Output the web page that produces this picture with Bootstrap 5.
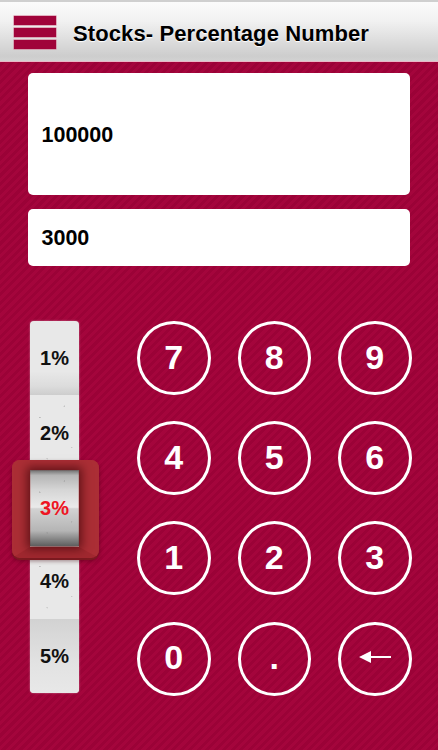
<!DOCTYPE html>
<html lang="en"><head><meta charset="utf-8">
<title>Stocks- Percentage Number</title>
<link href="https://cdn.jsdelivr.net/npm/bootstrap@5.3.0/dist/css/bootstrap.min.css" rel="stylesheet">
<style>
html,body{height:100%}
body{width:438px;height:750px;overflow:hidden;font-family:"Liberation Sans",Arial,sans-serif;font-weight:700;color:#000;
background-color:#a0033a;background-image:repeating-linear-gradient(135deg,#a4053c 0 3px,#9b0237 3px 6px)}
.top-bar{height:62px;padding:4px 0 0 14px;gap:17px;background:linear-gradient(#cfcfcf 0 2px,#fbfbfb 2px,#f1f1f1 35%,#cdcdcd 92%,#d2d2d2);border-bottom:1px solid #e9b9c6}
.burger{width:42px;height:33px;gap:3.5px}
.burger i{display:block;height:8.7px;background:#a0033a;box-shadow:0 0 0 .5px #cf6f8b}
.title-text{font-size:22px;letter-spacing:.1px;text-shadow:0 1px 1px #fff;line-height:1;margin-top:2px}
.fields{padding:11px 28px 0 27.5px;gap:14px}
.value-box{border:0;border-radius:5px;background:#fff;color:#000;font-size:21.5px;font-weight:700;padding:2px 14px 0;box-shadow:none}
.value-box.tall{height:122px}
.value-box.short{height:57px}
.lower{padding:55px 0 0 30px}
.percent-strip{width:49px;height:372px;border-radius:4px;color:#111;font-size:20px;
background-color:#e8e8e8;box-shadow:0 0 2px rgba(255,255,255,.5);overflow:hidden}
.percent-cell{height:74.4px;background-image:radial-gradient(circle at 20% 30%,#bbb 0 .6px,transparent 1px),radial-gradient(circle at 70% 15%,#c4c4c4 0 .6px,transparent 1px),radial-gradient(circle at 85% 70%,#c8c8c8 0 .6px,transparent 1px),radial-gradient(circle at 35% 85%,#cfcfcf 0 .6px,transparent 1px)}
.percent-cell.fold-bottom{background-image:linear-gradient(transparent 68%,#dcdcdc 88%,#cdcdcd)}
.percent-cell.fold-top{background-image:linear-gradient(#d2d2d2,#d8d8d8 20%,#e2e2e2 60%,#e8e8e8)}
.pick{color:#ee1522;font-size:20px}
.strip-wrap{width:49px}
.picker{position:absolute;left:-18px;top:139px;width:87px;height:98px;border-style:solid;border-width:10px 20px 11px 18px;border-color:#ab2e35;border-bottom-color:#a0282f;border-radius:8px;box-shadow:0 2px 0 #7c1a20,0 3px 4px rgba(60,0,10,.45),inset 0 0 0 1px rgba(200,90,90,.4)}
.picker-window{width:49px;height:76px;background:linear-gradient(rgba(70,70,70,.75),rgba(130,130,130,.5) 7%,rgba(170,170,170,.3) 26%,rgba(255,255,255,.1) 49%,rgba(170,170,170,.35) 51%,rgba(130,130,130,.5) 80%,rgba(60,60,60,.8));box-shadow:0 0 9px 3px rgba(50,0,5,.6)}
.keypad{margin-left:58px;display:grid;grid-template-columns:repeat(3,73.5px);grid-auto-rows:74px;column-gap:27px;row-gap:26.2px}
.key-round{width:73.5px;height:74px;padding:0 0 3px;border:3px solid #fff;border-radius:50%;background:transparent;color:#fff;font-size:34px;font-weight:700;line-height:1;font-family:inherit}
</style></head>
<body>
<header class="top-bar d-flex align-items-center">
  <div class="burger d-flex flex-column" aria-label="Menu"><i></i><i></i><i></i></div>
  <div class="title-text">Stocks- Percentage Number</div>
</header>
<section class="fields d-flex flex-column">
  <div class="form-control value-box tall d-flex align-items-center">100000</div>
  <div class="form-control value-box short d-flex align-items-center">3000</div>
</section>
<section class="lower d-flex">
  <div class="strip-wrap position-relative">
    <div class="percent-strip d-flex flex-column">
      <div class="percent-cell fold-bottom d-flex align-items-center justify-content-center">1%</div>
      <div class="percent-cell d-flex align-items-center justify-content-center">2%</div>
      <div class="percent-cell d-flex align-items-center justify-content-center"></div>
      <div class="percent-cell d-flex align-items-center justify-content-center">4%</div>
      <div class="percent-cell fold-top d-flex align-items-center justify-content-center">5%</div>
    </div>
    <div class="picker"><div class="picker-window d-flex align-items-center justify-content-center"><span class="pick">3%</span></div></div>
  </div>
  <div class="keypad">
    <button class="btn key-round">7</button><button class="btn key-round">8</button><button class="btn key-round">9</button>
    <button class="btn key-round">4</button><button class="btn key-round">5</button><button class="btn key-round">6</button>
    <button class="btn key-round">1</button><button class="btn key-round">2</button><button class="btn key-round">3</button>
    <button class="btn key-round">0</button><button class="btn key-round">.</button>
    <button class="btn key-round d-flex align-items-center justify-content-center" aria-label="Backspace">
      <svg width="34" height="14" viewBox="0 0 34 14"><path d="M1 7 13 1v5h20v2H13v5z" fill="#fff"/></svg>
    </button>
  </div>
</section>
<script src="https://cdn.jsdelivr.net/npm/bootstrap@5.3.0/dist/js/bootstrap.bundle.min.js"></script>
</body></html>
